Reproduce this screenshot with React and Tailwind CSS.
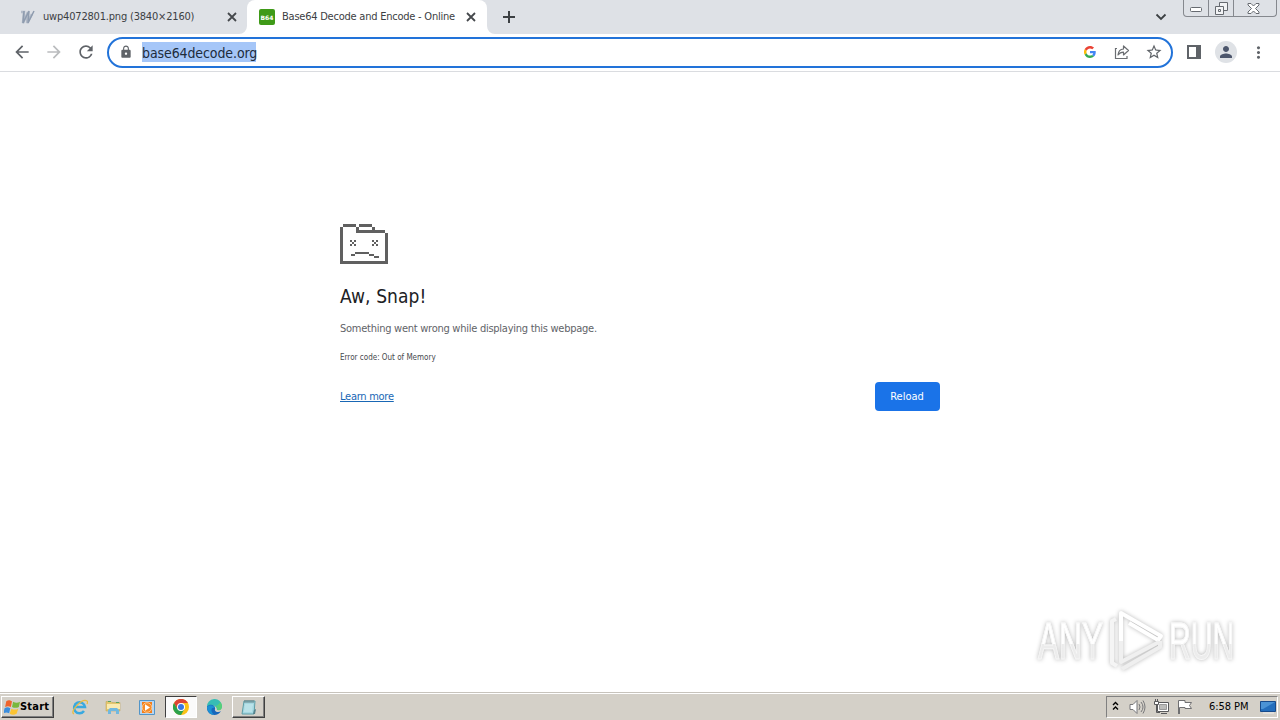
import { MdArrowBack, MdArrowForward, MdRefresh, MdLock, MdStarBorder, MdPerson, MdMoreVert } from 'react-icons/md';

const UI = "font-['DejaVu_Sans_Condensed','DejaVu_Sans',sans-serif] [font-stretch:condensed]";

function GoogleLogo() {
  return (
    <svg width="12" height="12" viewBox="0 0 48 48">
      <path fill="#EA4335" d="M24 9.5c3.54 0 6.71 1.22 9.21 3.6l6.85-6.85C35.9 2.38 30.47 0 24 0 14.62 0 6.51 5.38 2.56 13.22l7.98 6.19C12.43 13.72 17.74 9.5 24 9.5z" />
      <path fill="#4285F4" d="M46.98 24.55c0-1.57-.15-3.09-.38-4.55H24v9.02h12.94c-.58 2.96-2.26 5.48-4.78 7.18l7.73 6c4.51-4.18 7.09-10.36 7.09-17.65z" />
      <path fill="#FBBC05" d="M10.53 28.59a14.5 14.5 0 0 1 0-9.18l-7.98-6.19a24 24 0 0 0 0 21.56l7.98-6.19z" />
      <path fill="#34A853" d="M24 48c6.48 0 11.93-2.13 15.89-5.81l-7.73-6c-2.15 1.45-4.92 2.3-8.16 2.3-6.26 0-11.57-4.22-13.47-9.91l-7.98 6.19C6.51 42.62 14.62 48 24 48z" />
    </svg>
  );
}

function ShareIcon() {
  return (
    <svg width="16" height="16" viewBox="0 0 16 16" fill="none" stroke="#6b6e72" strokeWidth="1.2">
      <path d="M3 4.500H1.500v10H13v-2.500" />
      <path d="M9.500 2v3C6 5.200 4.300 7.500 4 11c1.400-2 3-2.800 5.500-2.800V11l5-4.500z" strokeLinejoin="round" />
    </svg>
  );
}

function CloseIcon() {
  return (
    <svg className="shrink-0" width="14" height="14" fill="none" stroke="#45484c" strokeWidth="1.800"><path d="m3 3 8 8M11 3l-8 8" /></svg>
  );
}

function SadTab() {
  return (
    <svg width="48" height="40" viewBox="0 0 48 40" fill="#606060" shapeRendering="crispEdges">
      <path d="M3 0h13v3H3zM0 3h3v37H0zM19 0h13v3H19zM16 3h3v3h-3zM32 3h3v3h-3zM16 6h29v3H16zM45 9h3v31h-3zM3 37h42v3H3z" />
      <path d="M10 16h2v2h-2zM14 16h2v2h-2zM12 18h2v2h-2zM10 20h2v2h-2zM14 20h2v2h-2z" />
      <path d="M32 16h2v2h-2zM36 16h2v2h-2zM34 18h2v2h-2zM32 20h2v2h-2zM36 20h2v2h-2z" />
      <path d="M11 30h4v2h-4zM15 28h14v2H15zM29 30h5v2h-5zM34 32h5v2h-5z" />
    </svg>
  );
}

function Tabs() {
  return (
    <div className="flex h-[34px] bg-[#dee1e6] text-[11px] text-[#3c4043]">
      <div className="flex w-[247px] items-center pl-5">
        <svg width="16" height="16" viewBox="0 0 16 16" fill="none">
          <path d="M1 3h3L3 14 8 3 7 14 12 5" stroke="#b3bbc8" strokeWidth="2.500" />
          <path d="M4 2 3 14 9 2 8 14 14 2" stroke="#8f9caf" strokeWidth="1.500" />
        </svg>
        <span className="ml-[7px] w-[182px] whitespace-nowrap tracking-[-0.19px]">uwp4072801.png (3840×2160)</span>
        <CloseIcon />
      </div>
      <div className="relative flex w-60 items-center rounded-t-lg bg-white pl-3">
        <svg className="absolute bottom-0 -left-2" width="8" height="8"><path d="M8 0v8H0a8 8 0 0 0 8-8z" fill="#fff" /></svg>
        <svg className="absolute -right-2 bottom-0" width="8" height="8"><path d="M0 0v8h8a8 8 0 0 1-8-8z" fill="#fff" /></svg>
        <span className="flex h-4 w-4 items-center justify-center rounded-xs bg-[#3f9a18] font-['DejaVu_Sans'] text-[6px] font-bold [font-stretch:normal] text-white">B64</span>
        <span className="ml-[7px] w-[182px] whitespace-nowrap tracking-[-0.23px]">Base64 Decode and Encode - Online</span>
        <CloseIcon />
      </div>
      <div className="flex w-11 items-center justify-center">
        <svg width="14" height="14" stroke="currentColor" strokeWidth="2"><path d="M7 1v12M1 7h12" /></svg>
      </div>
      <div className="flex-1" />
      <div className="mr-[14px] flex w-4 items-center justify-center">
        <svg width="12" height="8" fill="none" stroke="currentColor" strokeWidth="1.800"><path d="m1.500 1.500 4.500 4.500 4.500-4.500" /></svg>
      </div>
      <div className="mr-[3px] flex h-[17px] rounded-b border border-t-0 border-[#85888e] text-[#666a70]">
        <div className="flex w-[25px] items-center justify-center border-r border-[#85888e] pt-[3px]">
          <svg width="12" height="5"><rect x=".5" y=".5" width="11" height="4" rx="1" fill="#fff" stroke="currentColor" /></svg>
        </div>
        <div className="flex w-[25px] items-center justify-center border-r border-[#85888e]">
          <svg width="13" height="13" fill="#f2f3f5" stroke="currentColor"><path d="M4.500.5h8v8h-8z" /><path d="M.5 4.500h8v8h-8z" /><path d="M3.500 7.500h2v2h-2z" /></svg>
        </div>
        <div className="flex w-[42px] items-center justify-center pr-1">
          <svg width="13" height="11" fill="#fff" stroke="currentColor"><path d="M1 .5h3l2.500 2.500L9 .5h3v1.500L8.500 5.500 12 9v1.500H9L6.500 8 4 10.500H1V9l3.500-3.500L1 2z" /></svg>
        </div>
      </div>
    </div>
  );
}

function Toolbar() {
  return (
    <div className="flex h-[38px] items-center border-b border-[#dadce0] bg-white pb-px pl-3 text-[#5f6368]">
      <MdArrowBack size={20} />
      <MdArrowForward size={20} className="ml-3 text-[#babcbe]" />
      <MdRefresh size={20} className="ml-3" />
      <div className="mt-[3px] ml-[11px] flex h-[31px] w-[1066px] items-center self-start rounded-full border-2 border-[#2273d9] pb-px pl-[10px]">
        <MdLock size={14} />
        <span className="ml-[9px] h-5 w-[114px] whitespace-nowrap bg-[#a5c6f8] text-[14px] leading-[22px] tracking-[-0.1px] text-[#202c3c]">base64decode.org</span>
        <div className="ml-auto flex items-center pr-[8px]">
          <GoogleLogo />
          <div className="mr-[15px] ml-[18px]"><ShareIcon /></div>
          <MdStarBorder size={18} />
        </div>
      </div>
      <svg className="ml-[14px]" width="14" height="14" fill="currentColor"><path fillRule="evenodd" d="M0 0h14v14H0zM2 2h7v10H2z" /></svg>
      <div className="ml-[14px] flex h-[22px] w-[22px] items-center justify-center rounded-full bg-[#dfe2e6] text-[#4c566c]"><MdPerson size={18} /></div>
      <MdMoreVert size={19} className="ml-[12px]" />
    </div>
  );
}

function Watermark() {
  return (
    <div className="absolute top-[610px] left-[1038px] flex items-center font-['Liberation_Sans',sans-serif] text-[51px] leading-none [font-stretch:normal] drop-shadow-[0_0_2px_#b8b8b8]">
      <span className="w-[65px]"><span className="inline-block origin-left scale-x-[0.62] bg-linear-to-b from-white from-55% to-[#ececec] to-55% bg-clip-text text-transparent [-webkit-text-stroke:1px_#f7f7f7]">ANY</span></span>
      <svg className="mr-[5px] ml-[5px]" width="56" height="62" viewBox="0 0 56 62" fill="none" stroke="#fff" strokeWidth="4" strokeLinejoin="round">
        <path d="M13 41V3l40 23-3 4-29-17" />
        <path d="M8 9 4 11v42l5 3" stroke="#f5f5f5" />
        <path d="M13 31v21l38-20" stroke="#f0f0f0" />
        <path d="m14 59 38-22v-6" stroke="#efefef" />
      </svg>
      <span className="w-[65px]"><span className="inline-block origin-left scale-x-[0.59] bg-linear-to-b from-white from-55% to-[#ececec] to-55% bg-clip-text text-transparent [-webkit-text-stroke:1px_#f7f7f7]">RUN</span></span>
    </div>
  );
}

function EdgeIcon() {
  return (
    <svg width="17" height="17" viewBox="0 0 17 17">
      <path d="M1 8A7.500 7.500 0 0 1 16 7c0 3-2 4-5 4 0-4-4-6-10-3z" fill="#37bdb4" />
      <path d="M1 7.500C4 4 10 6 9 10c-1 3 4 4 6 2-3 6-13 5-14-2z" fill="#1767bb" />
      <path d="M1 8c3-3 7-2 8 1-4-1-5 3-1 7-4 0-7-4-7-8z" fill="#1b91d4" />
      <path d="M9 8c2-1 3 1 2 3 4 1 5-1 5-4 0-2-1-3-2-4-1 3-3 3-5 5z" fill="#57cf79" />
    </svg>
  );
}

function ChromeIcon() {
  return (
    <svg width="16" height="16" viewBox="0 0 16 16">
      <circle cx="8" cy="8" r="8" fill="#fbc116" />
      <path d="M8 8 4.500 10 1 4A8 8 0 0 1 15 4H8z" fill="#dd4435" />
      <path d="M1 4a8 8 0 0 0 7 12l3.500-6H4.500z" fill="#2ba24c" />
      <circle cx="8" cy="8" r="4" fill="#fff" />
      <circle cx="8" cy="8" r="3" fill="#3777e3" />
    </svg>
  );
}

function Taskbar() {
  return (
    <div className="flex h-[28px] items-center border-t border-[#c7c3bc] bg-[#d4d0c8] pt-px text-black shadow-[inset_0_1px_0_#fff]">
      <div className="ml-px flex h-[22px] w-[53px] items-center border border-t-white border-r-[#404040] border-b-[#404040] border-l-white pl-[2px] text-[11px] font-bold shadow-[inset_-1px_-1px_0_#808080]">
        <svg className="shrink-0" width="16" height="16" viewBox="1 1 14 14">
          <path d="M3 3c2-1.500 3-1 5 0L7 8C5 7 4 7 2 8z" fill="#ef632b" />
          <path d="M9 3.500c2 1 4 1 6 0L14 8c-2 1-4 1-6 0z" fill="#79b83d" />
          <path d="M1.500 9c2-1 3-1 5 0l-1 4.500c-2-1-3-1-5 0z" fill="#3b8ddc" />
          <path d="M7.500 9.500c2 1 4 1 6 0L12 14c-2 1-4 1-6 0z" fill="#fbc433" />
        </svg>
        <span className="tracking-[0.2px]">Start</span>
      </div>
      <svg className="ml-[17px]" width="17" height="17" viewBox="0 0 17 17" fill="none">
        <path d="M13 12a5.500 5.500 0 1 1 1-4H4" stroke="#39a9e0" strokeWidth="2.500" />
        <path d="M3 15c-5-2 8-16 13-13 1 .5.5 2 0 3" stroke="#e8bc42" strokeWidth="1.300" />
      </svg>
      <svg className="ml-[17px]" width="17" height="17" viewBox="0 0 17 17">
        <path d="M1 2.500h5l1 1h8V12H1z" fill="#e4c66e" stroke="#bda054" strokeWidth=".5" />
        <path d="M2 5h13v5H2z" fill="#faeab0" />
        <path d="M3 15v-4l2-2h7l2 2v4h-3v-3H6v3z" fill="#71b8df" />
        <path d="M3 2h3v1H3zM11 3h3v1h-3z" fill="#57a460" />
      </svg>
      <svg className="ml-[17px]" width="16" height="17" viewBox="0 0 16 17">
        <path d="M.5 1.500h15v14H.5z" fill="#b9d5ef" stroke="#5295c8" />
        <path d="M3 3h10v11H3z" fill="#f47e19" />
        <circle cx="8" cy="8.500" r="4.800" fill="#f68b28" stroke="#fbd5a8" strokeWidth=".8" />
        <path d="m6 5.200 5 3.300-5 3.300z" fill="#fff" />
      </svg>
      <div className="ml-[10px] flex h-[22px] w-8 items-center justify-center border border-t-[#404040] border-r-white border-b-white border-l-[#404040] bg-[#fafafa]"><ChromeIcon /></div>
      <div className="ml-[9px]"><EdgeIcon /></div>
      <div className="ml-[9px] flex h-[22px] w-[33px] items-center justify-center border border-t-white border-r-[#404040] border-b-[#404040] border-l-white shadow-[inset_-1px_-1px_0_#808080]">
        <svg width="16" height="17" viewBox="0 0 16 17">
          <path d="M3 2h11l-1 13H1z" fill="#a5d8e1" stroke="#5e9da7" />
          <path d="M4 1v3M6 1v3M8 1v3M10 1v3M12 1v3" stroke="#5b6f74" strokeWidth=".8" />
          <path d="M4 6h8M3.500 8h8M3.500 10h8M3 12h8" stroke="#e3f6f8" strokeWidth=".7" />
          <path d="m12 15 1-4 2-1-1 5z" fill="#54828c" />
        </svg>
      </div>
      <div className="mr-[2px] ml-auto flex h-[22px] w-[172px] items-center border border-t-[#808080] border-r-white border-b-white border-l-[#808080] text-[11px]">
        <svg className="mb-[2px] ml-[5px]" width="7" height="10" fill="none" stroke="#000" strokeWidth="1.400"><path d="m1 4 2.500-2.500L6 4M1 8.500 3.500 6 6 8.500" /></svg>
        <svg className="ml-[10px]" width="17" height="16" fill="none" stroke="#77777a">
          <path d="M1 5.500h3l4-4v13l-4-4H1z" fill="#fff" />
          <path d="M10 5q2 3 0 6M12 3q4 5 0 10M14 1.500q4 6.500 0 13" />
        </svg>
        <svg className="ml-[7px]" width="17" height="16" fill="#fff" stroke="#59595b">
          <path d="M4.500 3.500h11v9h-11z" /><path d="M6.500 5.500h7v5h-7z" fill="#bcbcba" stroke="#999" /><path d="M8 14.500h6M3.500 6v7.500H7" fill="none" /><path d="M1.500 2.500h4v3h-4zM2.500 0v2M4.500 0v2" />
        </svg>
        <svg className="ml-[7px]" width="17" height="16" fill="#fff" stroke="#707072"><path d="M1.500 15V1.500H8v2h6.500l-2 3 2 3H8V8.500H2.500V15" /></svg>
        <span className="ml-[15px] w-[41px] whitespace-nowrap tracking-[-0.05px]">6:58 PM</span>
        <svg className="ml-[10px]" width="16" height="14"><path d="M.5 1.500h15v10H.5z" fill="#246ebc" stroke="#174a8b" /><path d="M1 2h14L3 9H1z" fill="#4b93d5" /><path d="M3 13h11" stroke="#eee" /></svg>
      </div>
    </div>
  );
}

export default function App() {
  return (
    <div className={`relative flex h-[720px] w-[1280px] flex-col overflow-hidden bg-white ${UI}`}>
      <Tabs />
      <Toolbar />
      <main className="flex-1 pt-[152px] pl-[340px]">
        <SadTab />
        <h1 className="mt-5 text-[19px] leading-6 tracking-[0.1px] text-[#202124]">Aw, Snap!</h1>
        <p className="mt-3 text-[11px] leading-[18px] tracking-[-0.26px] text-[#5f6368]">Something went wrong while displaying this webpage.</p>
        <p className="mt-[13px] text-[8px] leading-[14px] text-[#46494d]">Error code: Out of Memory</p>
        <div className="mt-[17px] flex w-[600px] items-center justify-between text-[11px]">
          <a className="pt-[2px] tracking-[-0.26px] text-[#1967b5] underline underline-offset-1">Learn more</a>
          <button className="h-[29px] w-[65px] rounded bg-[#1a73e8] pt-[2px] pr-px text-white">Reload</button>
        </div>
      </main>
      <Taskbar />
      <Watermark />
    </div>
  );
}
